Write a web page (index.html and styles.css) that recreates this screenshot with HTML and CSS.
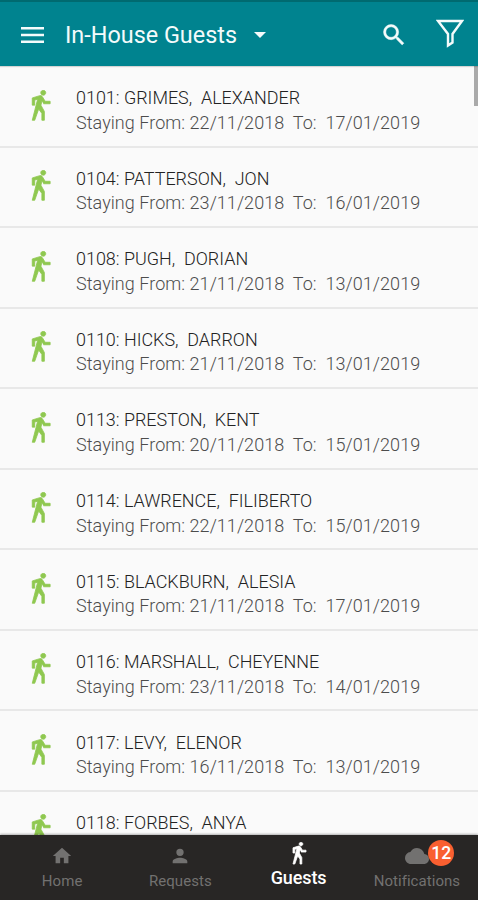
FILE: index.html
```html
<!DOCTYPE html>
<html lang="en">
<head>
    <meta charset="UTF-8">
    <meta name="viewport" content="width=device-width, initial-scale=1.0">
    <title>In-House Guests</title>
    <link rel="stylesheet" href="styles.css">
    <script src="main.js" defer></script>
</head>
<body>
    <svg class="defs">
        <symbol id="walk" viewBox="0 0 24 24">
            <path d="M14.12 10H19V8.2H15.38L13.38 4.87C13.08 4.37 12.54 4.03 11.92 4.03C11.74 4.03 11.58 4.06 11.42 4.11L6 5.8V11H7.8V7.33L9.91 6.67L6 22H7.8L10.67 13.89L13 17V22H14.8V15.59L12.31 11.05L13.04 8.18M14 3.8C15 3.8 15.8 3 15.8 2S15 .2 14 .2S12.2 1 12.2 2S13 3.8 14 3.8Z"/>
        </symbol>
    </svg>
    <header class="header">
        <svg class="menu" viewBox="0 0 24 18"><path d="M0 1h23v2.6H0zM0 7.7h23v2.6H0zM0 14.4h23v2.6H0z"/></svg>
        <h1 class="title">In-House Guests</h1>
        <svg class="caret" viewBox="0 0 12 6"><path d="M0 0h12L6 6z"/></svg>
        <svg class="search" viewBox="0 0 24 24"><path d="M15.5 14h-.79l-.28-.27A6.47 6.47 0 0 0 16 9.5A6.5 6.5 0 1 0 9.5 16c1.61 0 3.09-.59 4.23-1.57l.27.28v.79l5 4.99L20.49 19zm-6 0a4.5 4.5 0 1 1 0-9a4.5 4.5 0 0 1 0 9z"/></svg>
        <svg class="filter" viewBox="0 0 28 29"><path d="M2 2h24L16.5 15v8.5l-4.500 3V15z"/></svg>
    </header>
    <main class="list">
        <ul id="guests"></ul>
        <div class="scrollbar"></div>
    </main>
    <nav class="tabs">
        <a class="tab home">
            <svg viewBox="0 0 24 24"><path d="M10 20v-6h4v6h5v-8h3L12 3L2 12h3v8z"/></svg>
            <span>Home</span>
        </a>
        <a class="tab requests">
            <svg viewBox="0 0 24 24"><path d="M12 12a4 4 0 1 0 0-8a4 4 0 0 0 0 8zm0 2c-2.67 0-8 1.34-8 4v2h16v-2c0-2.66-5.33-4-8-4z"/></svg>
            <span>Requests</span>
        </a>
        <a class="tab active">
            <svg><use href="#walk"/></svg>
            <span>Guests</span>
        </a>
        <a class="tab notifications">
            <svg viewBox="0 0 24 24"><path d="M19.35 10.04A7.49 7.49 0 0 0 12 4C9.11 4 6.6 5.64 5.35 8.04A5.994 5.994 0 0 0 0 14c0 3.31 2.69 6 6 6h13c2.76 0 5-2.24 5-5c0-2.64-2.05-4.78-4.65-4.96z"/></svg>
            <span>Notifications</span>
            <b class="badge">12</b>
        </a>
    </nav>
</body>
</html>
```
FILE: styles.css
```css
* {
    padding: 0;
    margin: 0;
    box-sizing: border-box;
}
body {
    width: 478px;
    height: 900px;
    display: flex;
    flex-direction: column;
    overflow: hidden;
    background: #fafafa;
    font-family: Roboto, "Liberation Sans", sans-serif;
}
.defs {
    display: none;
}
.header {
    flex: none;
    display: flex;
    align-items: center;
    height: 66px;
    padding: 2px 14px 0 21px;
    background: #00838f;
    border-top: 2px solid #006a70;
    box-shadow: 0 1px 1px rgba(0, 0, 0, .15);
    fill: #f4fbfb;
    z-index: 1;
}
.menu {
    width: 24px;
    height: 18px;
}
.title {
    width: 172px;
    margin-left: 20px;
    font-size: 23.4px;
    font-weight: 400;
    color: #f4fbfb;
    white-space: nowrap;
}
.caret {
    width: 12px;
    height: 6px;
    margin-left: 17px;
}
.search {
    width: 28px;
    height: 28px;
    margin-left: auto;
    margin-top: -1px;
    stroke: #f4fbfb;
    stroke-width: .4;
}
.filter {
    width: 28px;
    height: 29px;
    margin-left: 28px;
    margin-top: -3px;
    fill: none;
    stroke: #f4fbfb;
    stroke-width: 2.4;
}

/* guest list */
.list {
    flex: 1;
    min-height: 0;
    position: relative;
    overflow: hidden;
}
#guests {
    padding-top: 1px;
}
.guest {
    display: flex;
    height: 80.55px;
    padding-left: 24px;
    list-style: none;
    border-bottom: 2px solid #e8e8e8;
}
.guest svg {
    width: 33px;
    height: 33px;
    margin-top: 22.5px;
    fill: #8fc850;
    stroke: #8fc850;
    stroke-width: .6;
}
.info {
    margin: 19.3px 0 0 19px;
    white-space: pre;
    font-weight: 300;
    line-height: 24.5px;
}
.name {
    font-size: 17.95px;
    color: #222;
}
.stay {
    font-size: 18px;
    color: #4c4c4c;
    letter-spacing: .05px;
}
.scrollbar {
    position: absolute;
    top: 0;
    right: 0;
    width: 4px;
    height: 40px;
    background: #aaa;
}

/* bottom tabs */
.tabs {
    flex: none;
    display: flex;
    height: 65px;
    padding: 0 2px 0 3px;
    background: #282625;
    box-shadow: 0 -1px 2px rgba(0, 0, 0, .3);
    z-index: 1;
}
.tab {
    position: relative;
    width: 118.3px;
    padding-top: 10px;
    display: flex;
    flex-direction: column;
    align-items: center;
    font-size: 15px;
    line-height: 18px;
    letter-spacing: .05px;
    color: #727170;
    fill: #727170;
}
.tab svg {
    width: 22px;
    height: 22px;
    margin-bottom: 5px;
}
.notifications svg {
    width: 24px;
    height: 24px;
    margin: -1px 0 4px;
}
.active {
    padding-top: 7px;
    font-size: 18px;
    font-weight: 500;
    line-height: 20px;
    letter-spacing: -.1px;
    color: #fff;
    fill: #fff;
}
.active svg {
    width: 24px;
    height: 24px;
    margin-bottom: 2px;
    stroke: #fff;
    stroke-width: .8;
}
.badge {
    position: absolute;
    left: 70.5px;
    top: 5px;
    width: 26px;
    height: 26px;
    border-radius: 50%;
    background: #f95f30;
    color: #fff;
    font-size: 17.5px;
    font-weight: 500;
    line-height: 27px;
    text-align: center;
}
```
FILE: main.js
```js
var guests = [
    ['0101', 'GRIMES', 'ALEXANDER', '22/11/2018', '17/01/2019'],
    ['0104', 'PATTERSON', 'JON', '23/11/2018', '16/01/2019'],
    ['0108', 'PUGH', 'DORIAN', '21/11/2018', '13/01/2019'],
    ['0110', 'HICKS', 'DARRON', '21/11/2018', '13/01/2019'],
    ['0113', 'PRESTON', 'KENT', '20/11/2018', '15/01/2019'],
    ['0114', 'LAWRENCE', 'FILIBERTO', '22/11/2018', '15/01/2019'],
    ['0115', 'BLACKBURN', 'ALESIA', '21/11/2018', '17/01/2019'],
    ['0116', 'MARSHALL', 'CHEYENNE', '23/11/2018', '14/01/2019'],
    ['0117', 'LEVY', 'ELENOR', '16/11/2018', '13/01/2019'],
    ['0118', 'FORBES', 'ANYA', '', '']
];
document.getElementById('guests').innerHTML = guests.map(function (g) {
    // the last row is cut off by the tab bar
    var stay = g[3] ? 'Staying From: ' + g[3] + '  To:  ' + g[4] : '';
    return '<li class="guest"><svg><use href="#walk"/></svg><div class="info">' +
        '<p class="name">' + g[0] + ': ' + g[1] + ',  ' + g[2] + '</p>' +
        '<p class="stay">' + stay + '</p></div></li>';
}).join('');
```
